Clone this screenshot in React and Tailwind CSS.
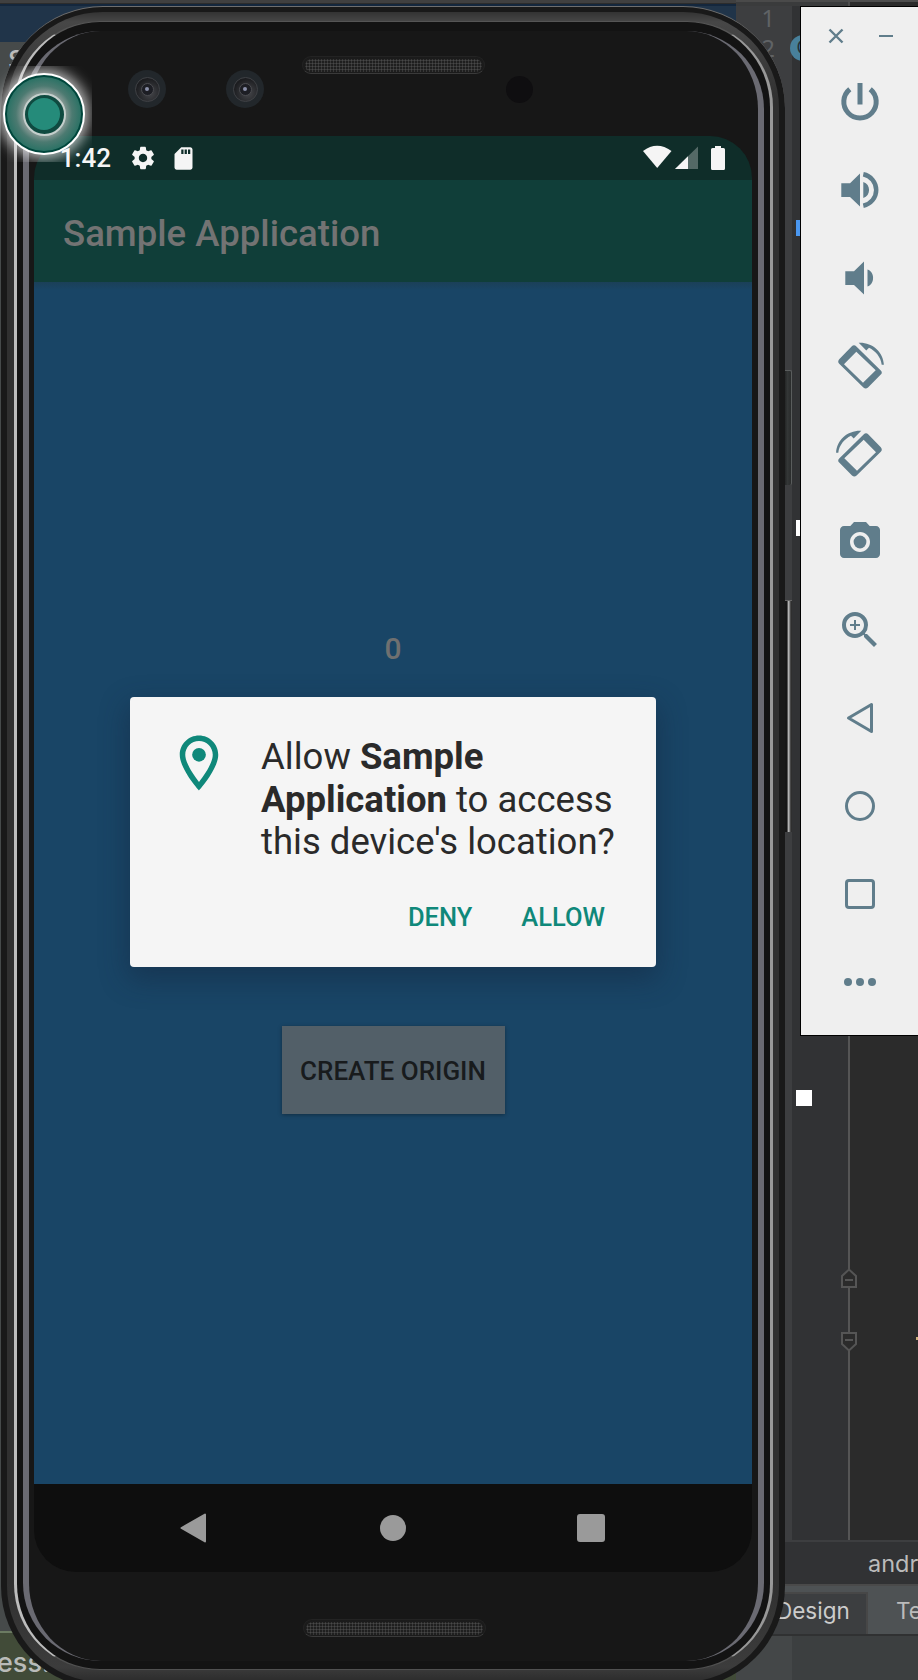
import React from "react";
import { MdPhotoCamera, MdZoomIn, MdSettings, MdSdCard, MdOutlineLocationOn } from "react-icons/md";

function Speaker({ className }) {
  return (
    <div className={`h-[18px] w-[183px] rounded-full border border-[#232323] border-b-[#3a3a3a] bg-[#1b1b1b] p-[2px] ${className}`}>
      <div className="h-[13px] w-full rounded-full bg-[radial-gradient(circle,#484848_0.8px,#1f1f1f_1.3px)] bg-[length:3px_3px]" />
    </div>
  );
}

function Lens({ className }) {
  return (
    <div className={`flex h-[38px] w-[38px] shrink-0 items-center justify-center rounded-full bg-[#22272b] ${className}`}>
      <div className="flex h-[25px] w-[25px] items-center justify-center rounded-full border border-[#3f4145] bg-[radial-gradient(circle_at_60%_65%,#45464a,#1c1d20_70%)]">
        <div className="flex h-[13px] w-[13px] items-center justify-center rounded-full border border-[#4b4c50] bg-[#1d1e24]">
          <div className="h-1 w-1 rounded-full bg-[#8a8fa8]" />
        </div>
      </div>
    </div>
  );
}

function RotateIcon({ flip }) {
  return (
    <svg width="48" height="48" viewBox="0 0 48 48" fill="#607d8b" className={flip ? "-scale-x-100" : ""}>
      <path
        fillRule="evenodd"
        d="M15.600 4.400Q18 2 20.400 4.400L44.800 28.400Q46.800 30.500 44.800 32.600L32 45.500Q29.700 47.500 27.400 45.500L3.200 21.800Q1.200 19.700 3.200 17.200ZM20.300 9.700L8 22.300L27 40.700L39.700 28.300Z"
      />
      <path d="M33 5.700C39.500 8.800 44.900 15.200 45.700 22.700H47.900C47.300 10 36.600 .7 24 .7L22.700 .8L30.300 8.400Z" />
    </svg>
  );
}

function Tool({ children }) {
  return <div className="flex h-[88px] items-center justify-center">{children}</div>;
}

function Toolbar() {
  return (
    <aside className="absolute left-[800px] top-[6px] h-[1030px] w-[130px] border border-black bg-[#efefef] text-[#607d8b]">
      <div className="flex h-[51px] items-center gap-[35px] pl-[27px] pt-[7px]">
        <svg width="16" height="16" viewBox="0 0 16 16" stroke="#607d8b" strokeWidth="2.4">
          <path d="M1.500 1.500 14.500 14.500M14.500 1.500 1.500 14.500" />
        </svg>
        <div className="h-[2px] w-[14px] bg-[#607d8b]" />
      </div>
      <div className="flex w-[118px] flex-col">
        <Tool>
          <svg width="40" height="40" viewBox="0 0 40 40" fill="none" stroke="#607d8b" strokeWidth="5">
            <path d="M20 1V22.500M9.800 7.200A16.200 16.200 0 1 0 30.200 7.200" />
          </svg>
        </Tool>
        <Tool>
          <svg width="40" height="40" viewBox="0 0 40 40" fill="#607d8b">
            <path d="M1.300 13.300H10L20 3.500V36.500L10 27H1.300ZM23.300 12C31 14 31 26 23.300 28Z" />
            <path d="M23.300 4.300A16 16 0 0 1 23.300 35.700" fill="none" stroke="#607d8b" strokeWidth="4.500" />
          </svg>
        </Tool>
        <Tool>
          <svg width="40" height="40" viewBox="0 0 40 40" fill="#607d8b">
            <path d="M5.300 13.300H14L24 3.500V36.500L14 27H5.300ZM27.500 11.500C35 13.500 35 26.500 27.500 28.500Z" />
          </svg>
        </Tool>
        <Tool><RotateIcon /></Tool>
        <Tool><RotateIcon flip /></Tool>
        <Tool><MdPhotoCamera size={48} /></Tool>
        <Tool><MdZoomIn size={48} /></Tool>
        <Tool>
          <svg width="30" height="32" viewBox="0 0 30 32" fill="none" stroke="#607d8b" strokeWidth="3" strokeLinejoin="round">
            <path d="M26.500 2.500V29.500L3.500 16Z" />
          </svg>
        </Tool>
        <Tool><div className="h-[30px] w-[30px] rounded-full border-[3px] border-[#607d8b]" /></Tool>
        <Tool><div className="h-[30px] w-[30px] rounded-[4px] border-[3px] border-[#607d8b]" /></Tool>
        <Tool>
          <div className="flex gap-1">
            <div className="h-2 w-2 rounded-full bg-[#607d8b]" />
            <div className="h-2 w-2 rounded-full bg-[#607d8b]" />
            <div className="h-2 w-2 rounded-full bg-[#607d8b]" />
          </div>
        </Tool>
      </div>
    </aside>
  );
}

/* The editor window that lies behind the emulator. */
function Editor() {
  return (
    <div className="absolute inset-0 flex font-['Inter','Liberation_Sans',sans-serif]">
      <div className="flex w-[736px] shrink-0 flex-col">
        <div className="h-1 border-b border-[#2c2c2c] bg-[#404040]" />
        <div className="h-[38px] border-t-2 border-[#14273d] bg-[#203449]" />
        <div className="flex-1 bg-[#464a4a] pl-2 pt-1 text-[26px] font-medium leading-7 text-[#bbbbbb]">S</div>
        <div className="h-[49px] overflow-hidden border-t-2 border-[#6b7b62] bg-[#414b38] pt-[12px] text-[27px] font-medium leading-9 text-[#b9bbb8]">
          <span className="-ml-[3px]">ess!</span>
        </div>
      </div>
      <div className="flex min-w-0 flex-1 flex-col overflow-hidden">
        <div className="flex h-[6px]">
          <div className="w-[112px] border-t-2 border-[#4a4a4a] bg-[#3a3b3c]" />
          <div className="flex-1 border-l-2 border-t-2 border-[#4d4d4d] bg-[#2b2b2b]" />
        </div>
        <div className="flex flex-1">
          <div className="w-[56px] bg-[#3d3e40] pr-[17px] text-right font-['Noto_Sans',sans-serif] text-[23.500px] leading-[30px] text-[#606366]">
            <div className="-mt-[3px]">1</div>
            <div>2</div>
          </div>
          <div className="w-[56px] bg-[#313234]" />
          <div className="w-[2px] bg-[#555555]" />
          <div className="flex-1 bg-[#2b2b2b]" />
        </div>
        <div className="h-[46px] border-b-2 border-t-2 border-b-[#4a4a4a] border-t-[#3d3e40] bg-[#313234] pl-[132px] text-[23.500px] leading-[44px] text-[#bbbbbb]">
          andr
        </div>
        <div className="flex h-[50px] border-b-2 border-[#303132] bg-[#4e5254] pt-[6px] text-[22.500px]">
          <div className="w-[132px] shrink-0 border-r-2 border-t-2 border-[#474747] bg-[#3c3e40] pl-[40px] leading-[34px] text-[#cccccc]">Design</div>
          <div className="pl-[28px] leading-[37px] text-[#bbbbbb]">Text</div>
        </div>
        <div className="flex h-[44px]">
          <div className="w-[56px] bg-[#444748]" />
          <div className="flex-1 bg-[#3c3f40]" />
        </div>
      </div>

      <div className="absolute left-[790px] top-[35px] h-[26px] w-[26px] rounded-full bg-[#48809b] text-center text-lg leading-[26px] text-[#233038]">C</div>
      <div className="absolute left-[796px] top-[220px] h-4 w-4 bg-[#4a97f0]" />
      <div className="absolute left-[796px] top-[520px] h-4 w-4 bg-white" />
      <div className="absolute left-[796px] top-[1090px] h-4 w-4 bg-white" />
      <svg className="absolute left-[840px] top-[1268px]" width="18" height="84" viewBox="0 0 18 84" fill="#2b2b2b" stroke="#555555" strokeWidth="2">
        <path d="M2 19V8L9 1.500L16 8V19ZM5 12H13" />
        <path d="M2 65V76L9 82.500L16 76V65ZM5 72H13" />
      </svg>
      <div className="absolute left-[916px] top-[1337px] h-[3px] w-[2px] bg-[#cdb07a]" />
    </div>
  );
}

function StatusBar() {
  return (
    <div className="flex h-[44px] items-center bg-[#0f2d29] pl-[25px] text-[#f5f5f5]">
      <span className="w-[52px] text-right text-[26px] font-medium leading-[46px]">1:42</span>
      <MdSettings size={28} className="ml-[18px]" />
      <MdSdCard size={27} className="ml-[13px]" />
      <svg className="ml-auto mr-[26px]" width="84" height="26" viewBox="0 0 84 26" fill="#f5f5f5">
        <path d="M1 6Q15-4.500 29.500 6L15.200 23Z" />
        <path d="M56 1.500V24H33Z" fillOpacity=".3" />
        <path d="M46 11.300V24H33Z" />
        <path d="M73 1H79V3H81.500Q83 3 83 4.500V23.500Q83 25 81.500 25H70.500Q69 25 69 23.500V4.500Q69 3 70.500 3H73Z" />
      </svg>
    </div>
  );
}

function Dialog() {
  return (
    <div className="mx-auto mt-[415px] h-[270px] w-[526px] rounded-[4px] bg-[#f5f5f5] shadow-[0_10px_28px_2px_rgba(20,35,60,0.45)]">
      <div className="flex pl-[36px] pt-[33px]">
        <MdOutlineLocationOn size={66} className="shrink-0 text-[#0f887a]" />
        <p className="ml-[29px] mt-[6px] whitespace-nowrap text-[36.500px] leading-[42.700px] text-[#2a2a2a]">
          Allow <b>Sample</b>
          <br />
          <b>Application</b> to access
          <br />
          this device's location?
        </p>
      </div>
      <div className="mt-[36px] flex justify-end gap-[49px] pr-[51px] text-[25.500px] font-medium leading-[34px] text-[#0f887a]">
        <span>DENY</span>
        <span>ALLOW</span>
      </div>
    </div>
  );
}

function Screen() {
  return (
    <div className="ml-[5px] flex h-[1436px] w-[718px] flex-col overflow-hidden rounded-[42px] font-['Roboto',sans-serif]">
      <StatusBar />
      <div className="h-[102px] bg-[#103e39] pl-[29px] text-[36.600px] font-medium leading-[107px] text-[#737373]">Sample Application</div>
      <div className="flex-1 bg-[#194566] bg-[linear-gradient(#1b4058,#194566_8px)]">
        <div className="relative">
          <div className="absolute left-0 right-0 top-[349px] text-center text-[30px] font-medium leading-[36px] text-[#6f7070]">0</div>
          <div className="flex flex-col">
            <Dialog />
            <div className="mx-auto mt-[59px] h-[88px] w-[223px] bg-[#525f68] text-center text-[26px] font-medium leading-[90px] text-[#181b1d] shadow-[0_1px_4px_rgba(0,0,0,0.35)]">
              CREATE ORIGIN
            </div>
          </div>
        </div>
      </div>
      <div className="flex h-[88px] items-center bg-[#0e0e0e] pl-[145px]">
        <svg width="28" height="30" viewBox="0 0 28 30" fill="#9a9a9a" stroke="#9a9a9a" strokeWidth="2" strokeLinejoin="round">
          <path d="M26 1.500V28.500L2.500 15Z" />
        </svg>
        <div className="ml-[173px] h-[26px] w-[26px] rounded-full bg-[#9a9a9a]" />
        <div className="ml-[171px] h-[28px] w-[28px] rounded-[3px] bg-[#9a9a9a]" />
      </div>
    </div>
  );
}

function Phone() {
  return (
    <>
      <div className="absolute left-[784px] top-[370px] h-[115px] w-[8px] rounded-r-[2px] border-r border-t border-[#5a5d5d] bg-[linear-gradient(90deg,#1e1f1f,#343737_50%,#2a2c2c)]" />
      <div className="absolute left-[784px] top-[600px] h-[232px] w-[8px] border-t border-[#666666] bg-[linear-gradient(90deg,#161616_35%,#cfcfcf_60%,#555_75%,#222)]" />
      <div className="absolute left-px top-[6px] h-[1682px] w-[784px] rounded-[102px] border-t border-[#6e6e6e] bg-[#191919] pb-[6px] pl-[6px] pr-[6px] pt-[5px]">
        <div className="h-full rounded-[96px] bg-[linear-gradient(#333333,#474747_10px,#303030_90px,#303030_1570px,#3c3c3c_1655px,#2b2b2b)] pb-[12px] pl-[7px] pr-[6px] pt-[9px]">
          <div className="h-full rounded-[86px] border-b border-l-[3px] border-r-[3px] border-t border-b-[#505050] border-l-[#bdbdbd] border-r-[#989898] border-t-[#555555] bg-[#131313] px-[6px] pb-[8px] pt-[9px]">
            <div className="h-full rounded-[78px] border-l-[6px] border-r-[6px] border-[#6a6a72] bg-[#171717]">
              <div className="flex h-[105px] items-start pl-[99px]">
                <Lens className="mt-[39px]" />
                <Lens className="ml-[60px] mt-[39px]" />
                <Speaker className="ml-[38px] mt-[25px]" />
                <div className="ml-[21px] mt-[45px] h-[27px] w-[27px] rounded-full bg-[#0f0e10]" />
              </div>
              <Screen />
              <Speaker className="ml-[274px] mt-[47px]" />
            </div>
          </div>
        </div>
      </div>
    </>
  );
}

function Touch() {
  return (
    <div className="absolute left-0 top-[66px] h-[96px] w-[92px] overflow-hidden">
      <div className="ml-[3px] mt-[7px] flex h-[82px] w-[82px] items-center justify-center rounded-full border-2 border-white bg-[#00463c] p-[2px] shadow-[0_0_14px_4px_rgba(255,255,255,0.7)]">
        <div className="flex h-full w-full items-center justify-center rounded-full bg-[radial-gradient(closest-side,#939f9c_54%,#4c7a71_76%,#2b7265)]">
          <div className="flex h-[43px] w-[43px] items-center justify-center rounded-full border-2 border-[#c4cfcc] bg-[#0f4a40]">
            <div className="h-[32px] w-[32px] rounded-full bg-[#258b7a]" />
          </div>
        </div>
      </div>
    </div>
  );
}

export default function App() {
  return (
    <div className="relative h-[1680px] w-[918px] overflow-hidden bg-[#2b2b2b]">
      <Editor />
      <Phone />
      <Toolbar />
      <Touch />
    </div>
  );
}
